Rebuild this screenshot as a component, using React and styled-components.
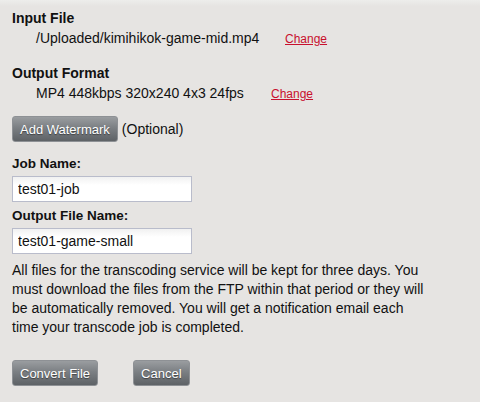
import React from 'react';
import styled, {createGlobalStyle} from 'styled-components';

const GlobalStyle = createGlobalStyle`
  html, body {
    margin: 0;
    padding: 0;
    background: #e6e4e2;
  }
  body {
    font-family: Arial, "Liberation Sans", sans-serif;
    color: #111;
  }
`;

const Page = styled.div`
  width: 480px;
  height: 402px;
  box-sizing: border-box;
  padding: 8px 12px 0 12px;
  background: linear-gradient(to bottom, #ededeb 0, #e6e4e2 6px);
`;

const SectionTitle = styled.div`
  font-size: 14px;
  font-weight: bold;
  line-height: 20px;
`;

const InfoRow = styled.div`
  display: flex;
  align-items: baseline;
  padding-left: 24px;
  font-size: 14px;
  line-height: 20px;
  margin-bottom: ${props => props.gap}px;
`;

const InfoText = styled.span`
  width: ${props => props.width}px;
`;

const ChangeLink = styled.a`
  font-size: 12px;
  color: #c8102e;
  text-decoration: underline;
`;

const Button = styled.button`
  font-family: Arial, "Liberation Sans", sans-serif;
  font-size: 13px;
  color: #fff;
  text-shadow: 0 1px 1px rgba(0, 0, 0, 0.45);
  height: 26px;
  padding: 0 7px;
  border: 1px solid #8e9195;
  border-radius: 3px;
  background: linear-gradient(to bottom, #9a9da0 0%, #7b7f83 45%, #5e6266 100%);
  cursor: pointer;
`;

const WatermarkRow = styled.div`
  display: flex;
  align-items: center;
  gap: 4px;
  font-size: 14px;
  margin-bottom: 13px;
`;

const FieldLabel = styled.label`
  display: block;
  font-size: 13.5px;
  font-weight: bold;
  line-height: 18px;
  margin-bottom: 3px;
`;

const TextInput = styled.input`
  display: block;
  box-sizing: border-box;
  width: 180px;
  height: 26px;
  padding: 0 5px;
  font-family: Arial, "Liberation Sans", sans-serif;
  font-size: 14px;
  color: #111;
  border: 1px solid #b9bccb;
  background: linear-gradient(to bottom, #f1f1f1 0, #ffffff 8px);
  margin-bottom: ${props => props.gap}px;
  outline: none;
`;

const Notice = styled.p`
  margin: 0;
  width: 420px;
  font-size: 14px;
  line-height: 19px;
`;

const Actions = styled.div`
  display: flex;
  gap: 35px;
  margin-top: 23px;
`;

function App() {
  return (
    <Page>
      <GlobalStyle />
      <SectionTitle>Input File</SectionTitle>
      <InfoRow gap={14}>
        <InfoText width={249}>/Uploaded/kimihikok-game-mid.mp4</InfoText>
        <ChangeLink href="#">Change</ChangeLink>
      </InfoRow>
      <SectionTitle>Output Format</SectionTitle>
      <InfoRow gap={12}>
        <InfoText width={235}>MP4 448kbps 320x240 4x3 24fps</InfoText>
        <ChangeLink href="#">Change</ChangeLink>
      </InfoRow>
      <WatermarkRow>
        <Button>Add Watermark</Button>
        <span>(Optional)</span>
      </WatermarkRow>
      <FieldLabel>Job Name:</FieldLabel>
      <TextInput gap={5} defaultValue="test01-job" />
      <FieldLabel>Output File Name:</FieldLabel>
      <TextInput gap={7} defaultValue="test01-game-small" />
      <Notice>
        All files for the transcoding service will be kept for three days. You
        must download the files from the FTP within that period or they will
        be automatically removed. You will get a notification email each time
        your transcode job is completed.
      </Notice>
      <Actions>
        <Button>Convert File</Button>
        <Button>Cancel</Button>
      </Actions>
    </Page>
  );
}

export default App;
